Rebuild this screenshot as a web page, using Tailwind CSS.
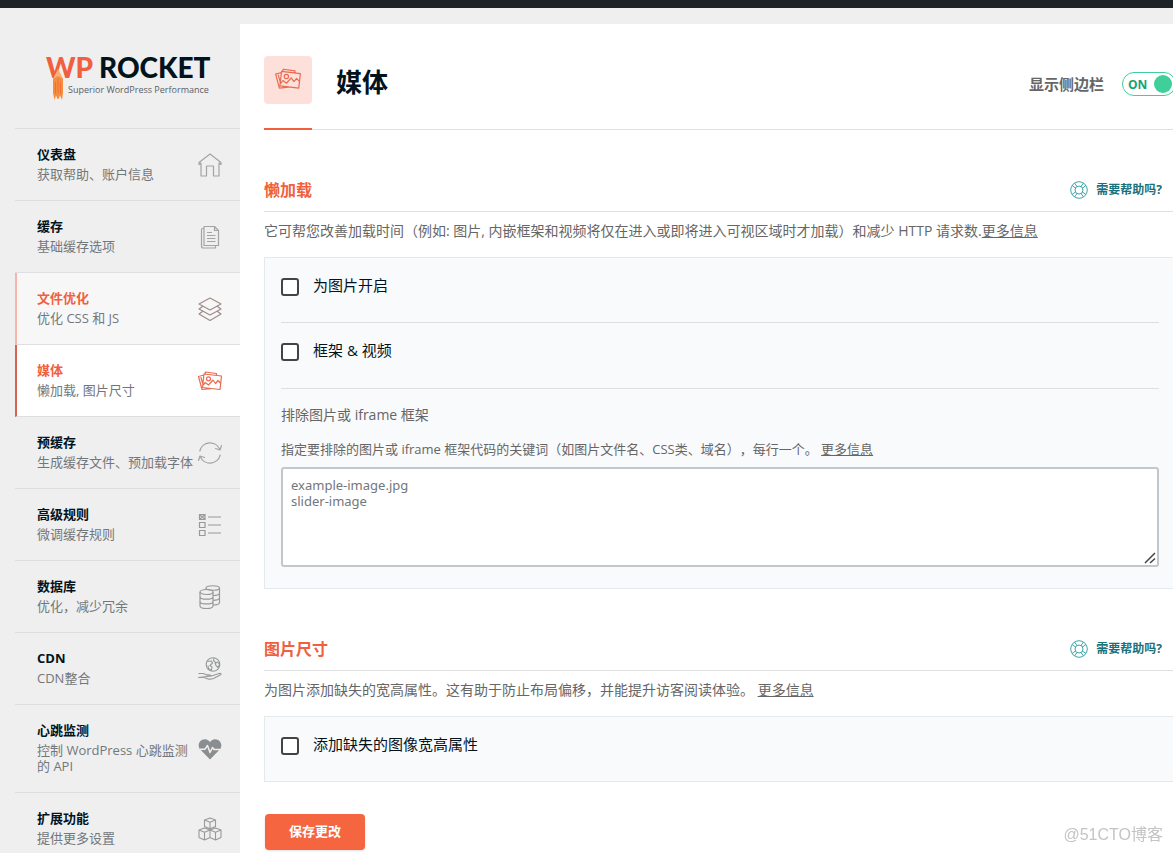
<!DOCTYPE html>
<html lang="zh-CN">
<head>
<meta charset="utf-8">
<title>WP Rocket - 媒体</title>
<script src="https://cdn.jsdelivr.net/npm/@tailwindcss/browser@4"></script>
</head>
<body class="flex h-screen flex-col overflow-hidden bg-[#efefef] font-['Open_Sans','Noto_Sans_CJK_SC',sans-serif] text-[13px] text-[#666666] [text-spacing-trim:space-all]">
<div class="h-2 shrink-0 bg-[#1d2327]"></div>
<div class="flex min-h-0 flex-1">
  <aside class="w-60 shrink-0 pl-[15px]">
    <a href="#" aria-label="WP Rocket" class="flex h-[120px] flex-col pt-[43px] pl-[31px] font-['Lato','Open_Sans',sans-serif]">
      <span class="text-[28px] leading-[32px] font-black whitespace-nowrap text-[#02131d]"><span class="text-[#f0603f]">WP</span> ROCKET</span>
      <span class="flex gap-1">
        <svg class="-mt-3.5 ml-1.5 h-8 w-3 shrink-0" viewBox="0 0 12 32"><path d="M6 0 11 10V24L10 31 8 26.500 6.500 30H5.500L4 26.500 2.500 31 1 24V10Z" fill="#f58d3d"/><path d="M6 0 11 10 6 7 1 10Z" fill="#f9b07a"/><path d="M6 10v14M3.500 13v12M8.500 13v12" stroke="#f0703a" stroke-width="1"/></svg>
        <span class="text-[9px] leading-[14px] whitespace-nowrap text-[#5a6064] font-['Open_Sans',sans-serif]">Superior WordPress Performance</span>
      </span>
    </a>
    <nav class="border-t border-[#dddfe0]">
      <a href="#" class="flex items-center justify-between border-b border-[#dddfe0] pr-[17px] pl-[22px]">
        <span class="pt-[15px] pb-[18px]"><b class="block leading-5 text-[#02131d]">仪表盘</b><span class="mt-0.5 block leading-4 text-[#72777c]">获取帮助、账户信息</span></span>
        <svg class="size-[26px] shrink-0" viewBox="0 0 26 26" fill="none" stroke="#a2a4a5" stroke-width="1.200" stroke-linejoin="round"><path d="M2 12.500V10.500L13 2 24 10.500V12.500L22 11V24H16.500V14H9.500V24H4V11Z"/></svg>
      </a>
      <a href="#" class="flex items-center justify-between border-b border-[#dddfe0] pr-[17px] pl-[22px]">
        <span class="pt-[15px] pb-[18px]"><b class="block leading-5 text-[#02131d]">缓存</b><span class="mt-0.5 block leading-4 text-[#72777c]">基础缓存选项</span></span>
        <svg class="size-[26px] shrink-0" viewBox="0 0 26 26" fill="none" stroke="#a2a4a5" stroke-width="1.200" stroke-linejoin="round"><path d="M7 2.500H17.500L21.500 6.500V21.500H7Z M17.500 2.500V6.500H21.500M7 4.500H5.500Q4.500 4.500 4.500 5.500V22Q4.500 24 6.500 24H18.500V21.500M10 8.500H15M10 11.500H18.500M10 14.500H18.500M10 17.500H18.500"/></svg>
      </a>
      <a href="#" class="flex items-center justify-between border-b border-l-2 border-b-[#dddfe0] border-l-[#f5b5a8] bg-[#f7f7f7] pr-[17px] pl-5">
        <span class="pt-[15px] pb-[18px]"><b class="block leading-5 text-[#f0603f]">文件优化</b><span class="mt-0.5 block leading-4 text-[#72777c]">优化 CSS 和 JS</span></span>
        <svg class="size-[26px] shrink-0" viewBox="0 0 26 26" fill="none" stroke="#a08c87" stroke-width="1.200" stroke-linejoin="round"><path d="M13 2 24 8 13 14 2 8Z M5.500 10.500 2 13 13 19 24 13 20.500 10.500M5.500 15.500 2 18 13 24.500 24 18 20.500 15.500"/></svg>
      </a>
      <a href="#" aria-current="page" class="flex items-center justify-between border-b border-l-2 border-b-[#dddfe0] border-l-[#d8634d] bg-white pr-[17px] pl-5">
        <span class="pt-[15px] pb-[18px]"><b class="block leading-5 text-[#f0603f]">媒体</b><span class="mt-0.5 block leading-4 text-[#72777c]">懒加载, 图片尺寸</span></span>
        <svg class="size-[26px] shrink-0" viewBox="0 0 26 26" fill="none" stroke="#ea6b50" stroke-width="1.200" stroke-linejoin="round" stroke-linecap="round"><path d="M7 6 24.500 8 23 21.500 5.500 19.500ZM5.800 17.500 8.300 14.500 11.500 17 16 12 18.500 15.500 21 12.500 23.800 15.500M8 5.900 8.500 4 19.500 5.500V7.300M6.900 7 1.500 8.500 5 21.500 13.500 20.600M4 9.500 5.500 15"/><circle cx="11.500" cy="10.800" r="2"/></svg>
      </a>
      <a href="#" class="flex items-center justify-between border-b border-[#dddfe0] pr-[17px] pl-[22px]">
        <span class="pt-[15px] pb-[18px]"><b class="block leading-5 text-[#02131d]">预缓存</b><span class="mt-0.5 block leading-4 whitespace-nowrap text-[#72777c]">生成缓存文件、预加载字体</span></span>
        <svg class="size-[26px] shrink-0" viewBox="0 0 26 26" fill="none" stroke="#a2a4a5" stroke-width="1.200" stroke-linejoin="round" stroke-linecap="round"><path d="M2.800 11A10.500 10.500 0 0 1 22.800 9.500M24.500 5.500 23 10 18.500 8.500M23.200 15A10.500 10.500 0 0 1 3.200 16.500M1.500 20.500 3 16 7.500 17.500"/></svg>
      </a>
      <a href="#" class="flex items-center justify-between border-b border-[#dddfe0] pr-[17px] pl-[22px]">
        <span class="pt-[15px] pb-[18px]"><b class="block leading-5 text-[#02131d]">高级规则</b><span class="mt-0.5 block leading-4 text-[#72777c]">微调缓存规则</span></span>
        <svg class="size-[26px] shrink-0" viewBox="0 0 26 26" fill="none" stroke="#97999a" stroke-width="1.200"><path d="M2.500 2.500H8V7.500H2.500ZM2.500 10.500H8V15.500H2.500ZM2.500 18.500H8V23.500H2.500ZM2.500 2.500 8 7.500M8 2.500 2.500 7.500M11 5H24M11 13H24M11 21H24"/></svg>
      </a>
      <a href="#" class="flex items-center justify-between border-b border-[#dddfe0] pr-[17px] pl-[22px]">
        <span class="pt-[15px] pb-[18px]"><b class="block leading-5 text-[#02131d]">数据库</b><span class="mt-0.5 block leading-4 text-[#72777c]">优化，减少冗余</span></span>
        <svg class="size-[26px] shrink-0" viewBox="0 0 26 26" fill="none" stroke="#97999a" stroke-width="1.200"><ellipse cx="9.500" cy="8" rx="6.500" ry="2.500"/><path d="M3 8V22C3 25.300 16 25.300 16 22V8M3 12.700C3 16 16 16 16 12.700M3 17.400C3 20.700 16 20.700 16 17.400M9 5.500V4C9 1 22.500 1 22.500 4V18.500C22.500 20 20 21 16 21M9 4C9 6.500 22.500 7.500 22.500 4M16 11.500C20 11.500 22.500 10.500 22.500 9M16 16.300C20 16.300 22.500 15.300 22.500 13.800"/></svg>
      </a>
      <a href="#" class="flex items-center justify-between border-b border-[#dddfe0] pr-[17px] pl-[22px]">
        <span class="pt-[15px] pb-[18px]"><b class="block leading-5 text-[#02131d]">CDN</b><span class="mt-0.5 block leading-4 text-[#72777c]">CDN整合</span></span>
        <svg class="size-[26px] shrink-0" viewBox="0 0 26 26" fill="none" stroke="#97999a" stroke-width="1.100" stroke-linejoin="round"><circle cx="16" cy="8.500" r="6.800"/><path d="M10.500 5.500 14.500 5 15.500 7 13 9.500 15 11 14.500 14.500 11.500 12.500 11 9.500M17 2 16.500 4.500 19 7 20.500 6 22.500 8.500 21 11.500 19 9.500 18 7M1.500 17.500H6L9 18.500 13 19 14.500 20H9M14.500 20 22 17.500Q24 17 24 18.500L16.500 22.500Q14 23.500 11 23L7 21.500H1.500Z"/></svg>
      </a>
      <a href="#" class="flex items-center justify-between border-b border-[#dddfe0] pr-[17px] pl-[22px]">
        <span class="pt-[15px] pb-[18px]"><b class="block leading-5 text-[#02131d]">心跳监测</b><span class="mt-0.5 block leading-4 text-[#72777c]">控制 WordPress 心跳监测的 API</span></span>
        <svg class="size-[26px] shrink-0" viewBox="0 0 26 26" fill="none" stroke-linejoin="round"><path d="M13 23.500 2.800 13C-.5 8 4 2.500 8.500 3.200 11 3.500 12.300 5 13 6.300 13.700 5 15 3.500 17.500 3.200 22 2.500 26.500 8 23.200 13Z" fill="#8b8e90"/><path d="M3 13.200H8L10.500 9.500 13 16.500 15.500 11.500 17 13.500H23" stroke="#efefef" stroke-width="1.500"/></svg>
      </a>
      <a href="#" class="flex items-center justify-between border-b border-[#dddfe0] pr-[17px] pl-[22px]">
        <span class="pt-[15px] pb-[18px]"><b class="block leading-5 text-[#02131d]">扩展功能</b><span class="mt-0.5 block leading-4 text-[#72777c]">提供更多设置</span></span>
        <svg class="size-[26px] shrink-0" viewBox="0 0 26 26" fill="none" stroke="#97999a" stroke-width="1.100" stroke-linejoin="round"><path d="M13 2 18.500 4V10.500L13 12.800 7.500 10.500V4ZM7.500 4 13 6.200 18.500 4M13 6.200V12.800M7.500 12 13 14V21.500L7.500 24 2 21.500V14ZM2 14 7.500 16.200 13 14M7.500 16.200V24M18.500 12 24 14V21.500L18.500 24 13 21.500V14ZM13 14 18.500 16.200 24 14M18.500 16.200V24"/></svg>
      </a>
    </nav>
  </aside>

  <main class="mt-4 min-w-0 flex-1 overflow-hidden bg-white pl-6">
    <div class="-mr-[3px] pt-8">
      <header class="flex h-[74px] items-start justify-between border-b border-[#dddfe0]">
        <div class="flex h-[74px] gap-6">
          <span class="h-[74px] w-12 border-b-2 border-[#f0603f]">
            <span class="flex size-12 items-center justify-center rounded bg-[#fde0da]">
              <svg class="size-7" viewBox="0 0 26 26" fill="none" stroke="#ea6b50" stroke-width="1.100" stroke-linejoin="round" stroke-linecap="round"><path d="M7 5 24.500 7 23 20.500 5.500 18.500ZM5.800 16.500 8.300 13.500 11.500 16 16 11 18.500 14.500 21 11.500 23.800 14.500M8 4.900 8.500 3 19.500 4.500V6.300M6.900 6 1.500 7.500 5 20.500 13.500 19.600M4 8.500 5.500 14"/><circle cx="11.500" cy="9.800" r="2"/></svg>
            </span>
          </span>
          <h1 class="text-[26px] leading-[52px] font-bold text-[#02131d]">媒体</h1>
        </div>
        <label class="flex items-center gap-[18px] pt-4 text-[15px] leading-6 font-bold text-[#666666]">
          <span>显示侧边栏</span>
          <input type="checkbox" role="switch" checked class="sr-only">
          <span class="flex h-6 w-[54px] items-center justify-between rounded-full border border-[#3ecf9b] pr-[3px] pl-[5px]"><span class="pt-0.5 text-xs text-[#12a377]">ON</span><span class="size-[18px] rounded-full bg-[#3ecf9b]"></span></span>
        </label>
      </header>

      <section class="pt-[47px]">
        <div class="flex items-center justify-between border-b border-[#dddfe0] pb-2 pr-[14px]">
          <h2 class="text-base leading-[26px] font-bold text-[#f0603f]">懒加载</h2>
          <a href="#" class="flex items-center gap-2 text-xs font-bold text-[#1a6f78]">
            <svg class="size-[18px]" viewBox="0 0 18 18" fill="none" stroke="#3fa5ac" stroke-width="1"><circle cx="9" cy="9" r="8.300"/><circle cx="9" cy="9" r="4"/><path d="M4.500 2 7 5.500M2 4.500 5.500 7M13.500 2 11 5.500M16 4.500 12.500 7M4.500 16 7 12.500M2 13.500 5.500 11M13.500 16 11 12.500M16 13.500 12.500 11"/></svg>需要帮助吗?</a>
        </div>
        <p class="pt-2 text-sm leading-[22px]">它可帮您改善加载时间（例如: 图片, 内嵌框架和视频将仅在进入或即将进入可视区域时才加载）和减少 HTTP 请求数.<a href="#" class="underline">更多信息</a></p>
        <div class="mt-[15px] border border-[#e3eaee] bg-[#f9fafc] px-4">
          <div class="border-b border-[#dddfe0] pt-[15px] pb-[25px]">
            <label class="flex items-center gap-[14px] text-[15px] leading-6 text-[#02131d]"><input type="checkbox" class="mt-1 size-[18px] appearance-none rounded-[3px] border-2 border-[#444444] bg-white"><span>为图片开启</span></label>
          </div>
          <div class="border-b border-[#dddfe0] pt-[15px] pb-[26px]">
            <label class="flex items-center gap-[14px] text-[15px] leading-6 text-[#02131d]"><input type="checkbox" class="mt-1 size-[18px] appearance-none rounded-[3px] border-2 border-[#444444] bg-white"><span>框架 <span class="font-medium">&amp;</span> 视频</span></label>
          </div>
          <label for="exclude" class="block pt-4 text-sm leading-5">排除图片或 <span class="font-medium">iframe</span> 框架</label>
          <p class="pt-[14px] leading-5">指定要排除的图片或 iframe 框架代码的关键词（如图片文件名、CSS类、域名），每行一个。 <a href="#" class="underline">更多信息</a></p>
          <div class="relative mt-2 mb-[21px]">
            <textarea id="exclude" placeholder="example-image.jpg
slider-image" class="block h-[100px] w-full resize-none rounded-[3px] border-2 border-[#c2c7cc] bg-white px-2 py-2 font-['Noto_Sans','Noto_Sans_CJK_SC',sans-serif] text-[13px] leading-4 placeholder:text-[#72777c]"></textarea>
            <svg class="pointer-events-none absolute right-[3px] bottom-[3px] size-3" viewBox="0 0 12 12" fill="none" stroke="#444444" stroke-width="1.500"><path d="M1 11 11 1M6 11 11 6.500"/></svg>
          </div>
        </div>
      </section>

      <section class="pt-[47px]">
        <div class="flex items-center justify-between border-b border-[#dddfe0] pb-2 pr-[14px]">
          <h2 class="text-base leading-[26px] font-bold text-[#f0603f]">图片尺寸</h2>
          <a href="#" class="flex items-center gap-2 text-xs font-bold text-[#1a6f78]">
            <svg class="size-[18px]" viewBox="0 0 18 18" fill="none" stroke="#3fa5ac" stroke-width="1"><circle cx="9" cy="9" r="8.300"/><circle cx="9" cy="9" r="4"/><path d="M4.500 2 7 5.500M2 4.500 5.500 7M13.500 2 11 5.500M16 4.500 12.500 7M4.500 16 7 12.500M2 13.500 5.500 11M13.500 16 11 12.500M16 13.500 12.500 11"/></svg>需要帮助吗?</a>
        </div>
        <p class="pt-2 text-sm leading-[22px]">为图片添加缺失的宽高属性。这有助于防止布局偏移，并能提升访客阅读体验。 <a href="#" class="underline">更多信息</a></p>
        <div class="mt-[15px] border border-[#e3eaee] bg-[#f9fafc] px-4 pt-[15px] pb-[25px]">
          <label class="flex items-center gap-[14px] text-[15px] leading-6 text-[#02131d]"><input type="checkbox" class="mt-1 size-[18px] appearance-none rounded-[3px] border-2 border-[#444444] bg-white"><span>添加缺失的图像宽高属性</span></label>
        </div>
      </section>
      <button type="button" class="mt-8 ml-px h-9 rounded bg-[#f56640] px-6 text-[13px] font-bold text-white shadow">保存更改</button>
    </div>
  </main>
</div>
<div class="pointer-events-none fixed right-[10px] bottom-1.5 font-['Liberation_Sans','Noto_Sans_CJK_SC',sans-serif] text-base text-[#c4c4c4]">@51CTO博客</div>
</body>
</html>
